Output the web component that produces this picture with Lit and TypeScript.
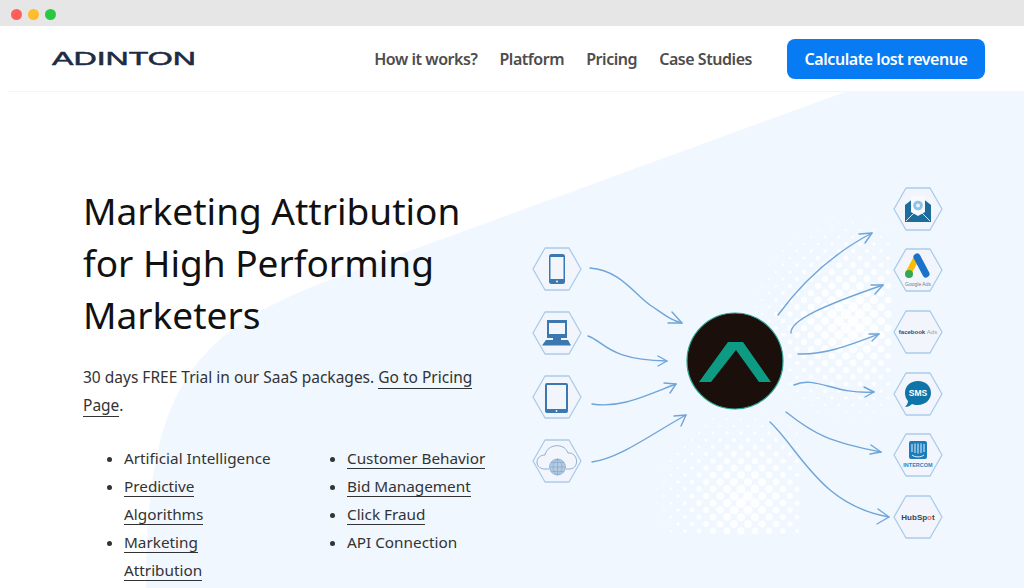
import { LitElement, html, svg, css } from "lit";
import { customElement } from "lit/decorators.js";

const HEX = (cx: number, cy: number) =>
  `${cx - 24},${cy} ${cx - 12},${cy - 21} ${cx + 12},${cy - 21} ${cx + 24},${cy} ${cx + 12},${cy + 21} ${cx - 12},${cy + 21}`;

const HEXES = [
  [557, 269], [557, 333], [557, 397], [557, 461],
  [918, 209], [918, 270], [918, 332], [918, 394], [918, 455], [918, 517],
];

// line + arrow head of every connector
const ARROWS = [
  ["M590 268C620 270 635 295 650 305S670 320 682 323", "M672 312L682 323L668 323"],
  ["M588 336C605 342 608 360 667 361", "M658 356L667 361L658 366"],
  ["M592 404C620 408 640 398 676 384", "M664 383L676 384L670 393"],
  ["M592 462C620 458 650 435 686 415", "M674 416L686 415L681 426"],
  ["M778 315C800 285 830 255 872 233", "M859 234L872 233L865 243"],
  ["M791 333C790 320 825 305 883 285", "M871 285L883 285L875 294"],
  ["M798 354C825 355 850 345 879 334", "M869 334L879 334L872 341"],
  ["M794 385C815 375 835 395 874 392", "M864 387L874 392L865 397"],
  ["M786 412C815 435 830 442 881 452", "M871 445L881 452L870 454"],
  ["M770 422C800 450 820 505 889 517", "M878 509L889 517L877 524"],
];

function halftone() {
  const blobs = [
    { x: 745, y: 500, rad: 105, size: 5.2 },
    { x: 850, y: 320, rad: 115, size: 5.6 },
  ];
  const dots = [];
  let row = 0;
  for (let y = 216; y < 532; y += 7) {
    const offset = row % 2 ? 7 : 0;
    for (let x = 650 + offset; x < 892; x += 14) {
      let r = 0;
      for (const b of blobs) {
        const d = Math.hypot(x - b.x, y - b.y);
        r = Math.max(r, b.size * (1 - d / b.rad));
      }
      if (x > 797 && y > 432) r = 0;
      if (r > 0.7) dots.push(svg`<circle cx=${x} cy=${y} r=${r.toFixed(1)}></circle>`);
    }
    row++;
  }
  return dots;
}

@customElement("app-root")
export class AppRoot extends LitElement {
  static styles = css`
    :host {
      display: block;
      width: 1024px;
      height: 588px;
      overflow: hidden;
      background: #fff;
      font-family: "Noto Sans", "Open Sans", sans-serif;
      color: #333;
    }
    .chrome {
      height: 26px;
      background: #e6e6e6;
      display: flex;
      align-items: center;
      gap: 6px;
      padding: 2px 0 0 11px;
      box-sizing: border-box;
    }
    .chrome i {
      width: 11px;
      height: 11px;
      border-radius: 50%;
    }
    .red { background: #ff5f57; }
    .yellow { background: #febc2e; }
    .green { background: #28c840; }
    .nav {
      height: 65px;
      margin-left: 8px;
      padding: 0 39px 0 44px;
      display: flex;
      align-items: center;
      border-bottom: 1px solid #f4f5f6;
    }
    .logo {
      display: block;
      margin-right: auto;
      overflow: visible;
    }
    .logo text {
      font-family: "Liberation Sans", sans-serif;
      font-weight: 400;
      font-size: 18px;
      fill: #1e2b45;
      stroke: #1e2b45;
      stroke-width: 0.5;
    }
    .links {
      display: flex;
      gap: 22px;
      margin-right: 35px;
      font-size: 16px;
      letter-spacing: -0.45px;
      font-weight: 600;
      color: #4d4d4d;
    }
    .cta {
      width: 198px;
      height: 40px;
      border-radius: 8px;
      background: #077bf3;
      color: #fff;
      font-size: 16px;
      letter-spacing: -0.45px;
      font-weight: 600;
      display: flex;
      align-items: center;
      justify-content: center;
    }
    .hero {
      position: relative;
      display: grid;
      grid-template-columns: 437px 440px;
      padding: 83px 0 0 83px;
      height: 413px;
      box-sizing: border-box;
    }
    .shape {
      position: absolute;
      left: 0;
      top: 0;
    }
    .copy, .diagram {
      position: relative;
    }
    .copy {
      padding-top: 10px;
    }
    h1 {
      margin: 0 0 22px;
      font-size: 37px;
      font-weight: 400;
      line-height: 52px;
      color: #111;
    }
    p {
      margin: 0 0 25px;
      width: 410px;
      font-size: 15.5px;
      line-height: 28px;
    }
    a {
      color: inherit;
      text-decoration: none;
      border-bottom: 1px solid #333;
    }
    .lists {
      display: flex;
    }
    ul {
      margin: 0;
      padding: 0 0 0 41px;
      font-size: 15.3px;
      line-height: 28px;
    }
    .first {
      width: 150px;
      padding-right: 32px;
    }
    .diagram {
      display: block;
    }
    .dots circle {
      fill: #fff;
      opacity: 0.8;
    }
    .hex {
      fill: #f3f5fc;
      stroke: #a9cbea;
      stroke-width: 1.3;
      stroke-linejoin: round;
    }
    .arrow {
      fill: none;
      stroke: #6fa5d8;
      stroke-width: 1.4;
      stroke-linecap: round;
      stroke-linejoin: round;
    }
    .device { fill: #3b78b0; }
    .screen { fill: #f3f5fc; }
    .cloud {
      fill: none;
      stroke: #8fb0d2;
      stroke-width: 1;
    }
    .globe {
      fill: #b4cbe3;
      stroke: #7fa5cb;
      stroke-width: 0.7;
    }
    .meridians {
      fill: none;
      stroke: #7fa5cb;
      stroke-width: 0.6;
    }
    .label {
      font-family: "Liberation Sans", sans-serif;
      text-anchor: middle;
    }
  `;

  renderDiagram() {
    return html`
      <svg class="diagram" width="440" height="370" viewBox="520 175 440 370">
        <g class="dots">${halftone()}</g>
        ${HEXES.map(([x, y]) => svg`<polygon class="hex" points=${HEX(x, y)}></polygon>`)}
        ${ARROWS.map(([line, head]) => svg`<path class="arrow" d=${line}></path><path class="arrow" d=${head}></path>`)}

        <circle cx="735" cy="361" r="48" fill="#1b0f0b" stroke="#2aa58f" stroke-width="1.2"></circle>
        <polygon points="699,382 728,342 743,342 771,382 759,382 736,350 711,382" fill="#0e9b83"></polygon>

        <!-- phone -->
        <rect class="device" x="549" y="254" width="16" height="30" rx="2.5"></rect>
        <rect class="screen" x="550.5" y="257" width="13" height="22"></rect>
        <circle class="screen" cx="557" cy="281.5" r="1"></circle>

        <!-- desktop -->
        <path class="device" d="M547 320H567V338H547ZM549 323V334H565V323Z" fill-rule="evenodd"></path>
        <rect class="device" x="553" y="338" width="8" height="2"></rect>
        <path class="device" d="M546 340H568L571 345.500H542Z"></path>

        <!-- tablet -->
        <rect class="device" x="545" y="383" width="23" height="30" rx="2"></rect>
        <rect class="screen" x="547" y="385" width="19" height="24"></rect>
        <circle class="screen" cx="556.500" cy="411" r="0.9"></circle>

        <!-- cloud and globe -->
        <path class="cloud" d="M549 469H544C534 468 535 455 545 455C547 444 564 442 568 453C578 452 580 468 570 469H566"></path>
        <circle class="globe" cx="557.500" cy="467" r="8"></circle>
        <path class="meridians" d="M549.500 467H565.500M557.500 459V475M551 462.500H564M551 471.500H564M557.500 459C551.500 463 551.500 471 557.500 475M557.500 459C563.500 463 563.500 471 557.500 475"></path>

        <!-- mail -->
        <path d="M905 205L912 199.500H924L931 205V222H905Z" fill="#1d6c9c"></path>
        <path d="M911 196H925V212L918 216L911 212Z" fill="#f6f9fd"></path>
        <circle cx="918" cy="205.500" r="4.800" fill="#8fc3e0"></circle>
        <circle cx="918" cy="205.500" r="2" fill="#e8f3fa"></circle>
        <path d="M906 221L914 213M930 221L922 213" stroke="#d9e8f3" stroke-width="1" fill="none"></path>

        <!-- google ads -->
        <path d="M917 257L909 272" stroke="#fbbc04" stroke-width="6" stroke-linecap="round"></path>
        <path d="M917 257L926 274" stroke="#1a73c8" stroke-width="7" stroke-linecap="round"></path>
        <circle cx="909" cy="274" r="4" fill="#34a853"></circle>
        <text class="label" x="918" y="286" font-size="5" fill="#7a7a7a">Google Ads</text>

        <!-- facebook ads -->
        <text class="label" x="918" y="334" font-size="6" font-weight="700" fill="#2c4a86">facebook <tspan fill="#9a9fa8" font-weight="400">Ads</tspan></text>

        <!-- sms -->
        <path d="M918 381C926 381 931 386 931 393C931 400 925 405 918 405C916 405 914 405 912 404C910 406 908 407 905 407C907 405 908 403 908 401C906 399 905 396 905 393C905 386 910 381 918 381Z" fill="#0f75a8"></path>
        <text class="label" x="918" y="396" font-size="8.500" font-weight="700" fill="#fff">SMS</text>

        <!-- intercom -->
        <rect x="909" y="441" width="18" height="18" rx="2" fill="#1b7dbb"></rect>
        <path d="M912 444V452M915 443.500V453M918 443.500V453.500M921 443.500V453M924 444V452M912 455C915 457.500 921 457.500 924 455" stroke="#e6f2fa" stroke-width="1" fill="none"></path>
        <text class="label" x="918" y="467" font-size="5.500" font-weight="700" fill="#2a84bf">INTERCOM</text>

        <!-- hubspot -->
        <text class="label" x="918" y="520" font-size="8" font-weight="700" fill="#33475b">HubSp<tspan fill="#f0714f">o</tspan>t</text>
      </svg>
    `;
  }

  render() {
    return html`
      <div class="chrome"><i class="red"></i><i class="yellow"></i><i class="green"></i></div>
      <header class="nav">
        <svg class="logo" width="144" height="16" viewBox="0 0 144 16">
          <text x="0" y="14" textLength="144" lengthAdjust="spacingAndGlyphs">ADINTON</text>
        </svg>
        <nav class="links">
          <span>How it works?</span><span>Platform</span><span>Pricing</span><span>Case Studies</span>
        </nav>
        <div class="cta">Calculate lost revenue</div>
      </header>
      <main class="hero">
        <svg class="shape" width="1024" height="496" viewBox="0 0 1024 496">
          <path d="M845 0H1024V496H146C146 300 190 240 330 188Z" fill="#f0f7ff"></path>
        </svg>
        <section class="copy">
          <h1>Marketing Attribution<br />for High Performing<br />Marketers</h1>
          <p>30 days FREE Trial in our SaaS packages. <a>Go to Pricing Page</a>.</p>
          <div class="lists">
            <ul class="first">
              <li>Artificial Intelligence</li>
              <li><a>Predictive Algorithms</a></li>
              <li><a>Marketing Attribution</a></li>
            </ul>
            <ul>
              <li><a>Customer Behavior</a></li>
              <li><a>Bid Management</a></li>
              <li><a>Click Fraud</a></li>
              <li>API Connection</li>
            </ul>
          </div>
        </section>
        ${this.renderDiagram()}
      </main>
    `;
  }
}
